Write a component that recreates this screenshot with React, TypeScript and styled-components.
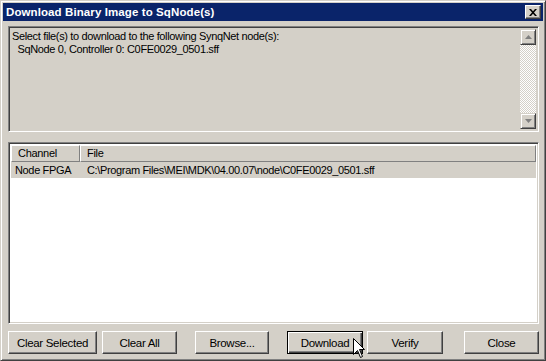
import styled, { createGlobalStyle } from "styled-components";

const GlobalStyle = createGlobalStyle`
  html, body {
    margin: 0;
    padding: 0;
    background: #d4d0c8;
  }
  * {
    box-sizing: border-box;
  }
`;

const Window = styled.div`
  position: relative;
  width: 546px;
  height: 361px;
  display: flex;
  flex-direction: column;
  background: #d4d0c8;
  border: 1px solid;
  border-color: #d4d0c8 #404040 #404040 #d4d0c8;
  box-shadow: inset 1px 1px #fff, inset -1px -1px #808080;
  padding: 2px;
  font-family: "Liberation Sans", Arial, sans-serif;
  font-size: 11px;
  color: #000;
`;

const TitleBar = styled.div`
  height: 18px;
  background: #0a246a;
  display: flex;
  align-items: center;
  justify-content: space-between;
  padding: 0 2px 0 3px;
`;

const Title = styled.span`
  color: #fff;
  font-weight: bold;
  font-size: 11.5px;
  letter-spacing: 0.1px;
`;

const CloseBox = styled.div`
  width: 16px;
  height: 14px;
  background: #d4d0c8;
  border: 1px solid;
  border-color: #fff #404040 #404040 #fff;
  box-shadow: inset -1px -1px #808080;
  display: flex;
  align-items: center;
  justify-content: center;
`;

const Body = styled.div`
  flex: 1;
  display: flex;
  flex-direction: column;
  padding: 5px 4px 0 5px;
`;

const Sunken = styled.div<{ $bg: string; $h: number }>`
  height: ${(p) => p.$h}px;
  background: ${(p) => p.$bg};
  border: 1px solid;
  border-color: #808080 #fff #fff #808080;
  box-shadow: inset 1px 1px #404040, inset -1px -1px #d4d0c8;
  padding: 2px;
  display: flex;
`;

const Spacer = styled.div`
  height: 10px;
`;

const InfoText = styled.div`
  flex: 1;
  padding: 1px 0 0 1px;
  line-height: 13px;
  white-space: pre;
  letter-spacing: -0.35px;
`;

const ScrollBar = styled.div`
  width: 16px;
  display: flex;
  flex-direction: column;
  justify-content: space-between;
  background-color: #fff;
  background-image: repeating-conic-gradient(#d4d0c8 0% 25%, #fff 0% 50%);
  background-size: 2px 2px;
`;

const ScrollBtn = styled.div`
  width: 16px;
  height: 16px;
  background: #d4d0c8;
  border: 1px solid;
  border-color: #d4d0c8 #404040 #404040 #d4d0c8;
  box-shadow: inset 1px 1px #fff, inset -1px -1px #808080;
  display: flex;
  align-items: center;
  justify-content: center;
`;

const ListWrap = styled.div`
  flex: 1;
  display: flex;
  flex-direction: column;
  background: #fff;
`;

const HeaderRow = styled.div`
  display: flex;
  height: 17px;
`;

const HeaderCell = styled.div<{ $w?: number }>`
  ${(p) => (p.$w ? `width: ${p.$w}px;` : "flex: 1;")}
  background: #d4d0c8;
  border: 1px solid;
  border-color: #fff #808080 #808080 #fff;
  padding: 1px 0 0 6px;
  letter-spacing: -0.3px;
`;

const Row = styled.div<{ $selected?: boolean }>`
  display: flex;
  height: 16px;
  align-items: center;
  background: ${(p) => (p.$selected ? "#d4d0c8" : "#fff")};
  letter-spacing: -0.35px;
`;

const Cell = styled.div<{ $w?: number }>`
  ${(p) => (p.$w ? `width: ${p.$w}px;` : "flex: 1;")}
  padding-left: 4px;
  white-space: nowrap;
`;

const ButtonRow = styled.div`
  display: flex;
  height: 23px;
  margin-top: 7px;
`;

const Button = styled.div<{ $w: number; $ml: number; $default?: boolean }>`
  width: ${(p) => p.$w}px;
  margin-left: ${(p) => p.$ml}px;
  height: 23px;
  background: #d4d0c8;
  border: 1px solid;
  border-color: ${(p) =>
    p.$default ? "#000" : "#fff #404040 #404040 #fff"};
  box-shadow: ${(p) =>
    p.$default
      ? "inset 1px 1px #fff, inset -1px -1px #404040, inset -2px -2px #808080"
      : "inset -1px -1px #808080"};
  display: flex;
  align-items: center;
  justify-content: center;
  font-size: 11.5px;
  letter-spacing: -0.3px;
`;

const Pointer = styled.svg`
  position: absolute;
  left: 352px;
  top: 337px;
`;

const buttons = [
  { label: "Clear Selected", w: 89, ml: 0 },
  { label: "Clear All", w: 75, ml: 5 },
  { label: "Browse...", w: 74, ml: 18 },
  { label: "Download", w: 76, ml: 18, def: true },
  { label: "Verify", w: 76, ml: 4 },
  { label: "Close", w: 75, ml: 21 },
];

export default function App() {
  return (
    <>
      <GlobalStyle />
      <Window>
        <TitleBar>
          <Title>Download Binary Image to SqNode(s)</Title>
          <CloseBox>
            <svg width="8" height="7" viewBox="0 0 8 7">
              <path d="M0 0h2l2 2.2L6 0h2L5 3.5 8 7H6L4 4.8 2 7H0l3-3.5z" fill="#000" />
            </svg>
          </CloseBox>
        </TitleBar>
        <Body>
          <Sunken $bg="#d4d0c8" $h={106}>
            <InfoText>
              {"Select file(s) to download to the following SynqNet node(s):\n  SqNode 0, Controller 0: C0FE0029_0501.sff"}
            </InfoText>
            <ScrollBar>
              <ScrollBtn>
                <svg width="7" height="4" viewBox="0 0 7 4">
                  <path d="M3.5 0L7 4H0z" fill="#808080" />
                </svg>
              </ScrollBtn>
              <ScrollBtn>
                <svg width="7" height="4" viewBox="0 0 7 4">
                  <path d="M0 0h7L3.5 4z" fill="#808080" />
                </svg>
              </ScrollBtn>
            </ScrollBar>
          </Sunken>
          <Spacer />
          <Sunken $bg="#fff" $h={182}>
            <ListWrap>
              <HeaderRow>
                <HeaderCell $w={69}>Channel</HeaderCell>
                <HeaderCell>File</HeaderCell>
              </HeaderRow>
              <Row $selected>
                <Cell $w={72}>Node FPGA</Cell>
                <Cell>C:\Program Files\MEI\MDK\04.00.07\node\C0FE0029_0501.sff</Cell>
              </Row>
            </ListWrap>
          </Sunken>
          <ButtonRow>
            {buttons.map((b) => (
              <Button key={b.label} $w={b.w} $ml={b.ml} $default={b.def}>
                {b.label}
              </Button>
            ))}
          </ButtonRow>
        </Body>
        <Pointer width="12" height="20" viewBox="0 0 12 20">
          <path
            d="M0.5 0.5V16.5L4.5 12.5L7.5 19.5L9.5 18.5L6.5 11.5H11.5Z"
            fill="#fff"
            stroke="#000"
            strokeWidth="1"
          />
        </Pointer>
      </Window>
    </>
  );
}
